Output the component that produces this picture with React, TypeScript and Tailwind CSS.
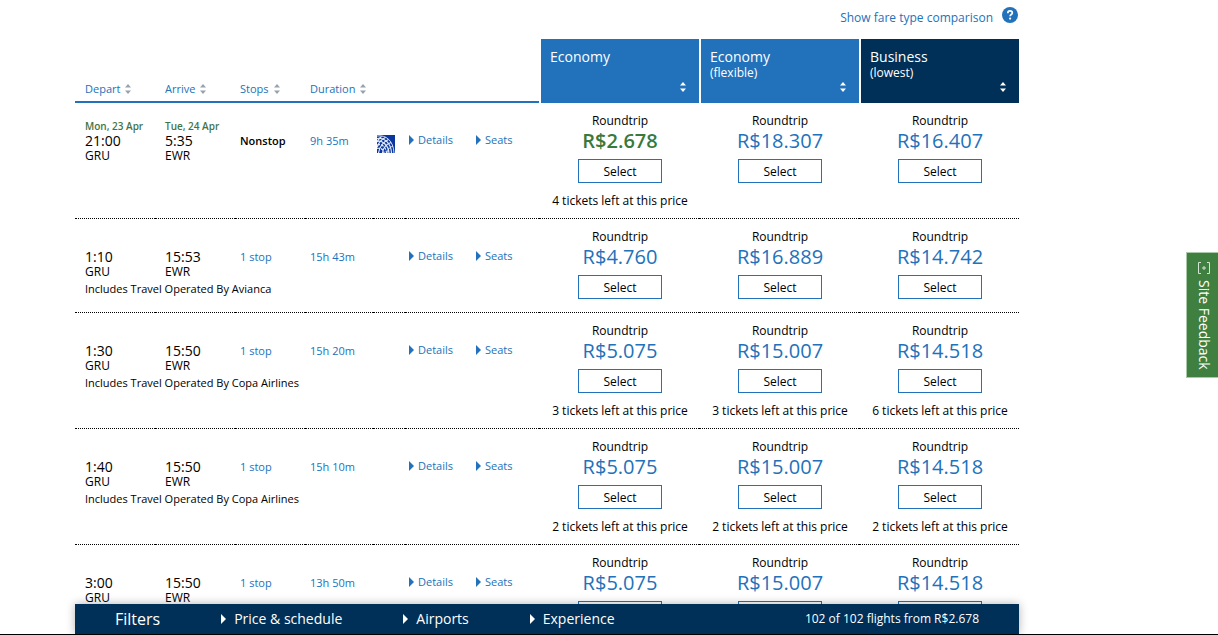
interface Fare {
  price: string;
  left?: number;
  best?: boolean;
}

interface Flight {
  id: number;
  depart: string;
  arrive: string;
  departDate?: string;
  arriveDate?: string;
  stops: string;
  duration: string;
  operatedBy?: string;
  united?: boolean;
  fares: Fare[];
}

const flights: Flight[] = [
  {
    id: 1,
    depart: "21:00",
    arrive: "5:35",
    departDate: "Mon, 23 Apr",
    arriveDate: "Tue, 24 Apr",
    stops: "Nonstop",
    duration: "9h 35m",
    united: true,
    fares: [
      { price: "R$2.678", left: 4, best: true },
      { price: "R$18.307" },
      { price: "R$16.407" },
    ],
  },
  {
    id: 2,
    depart: "1:10",
    arrive: "15:53",
    stops: "1 stop",
    duration: "15h 43m",
    operatedBy: "Avianca",
    fares: [{ price: "R$4.760" }, { price: "R$16.889" }, { price: "R$14.742" }],
  },
  {
    id: 3,
    depart: "1:30",
    arrive: "15:50",
    stops: "1 stop",
    duration: "15h 20m",
    operatedBy: "Copa Airlines",
    fares: [
      { price: "R$5.075", left: 3 },
      { price: "R$15.007", left: 3 },
      { price: "R$14.518", left: 6 },
    ],
  },
  {
    id: 4,
    depart: "1:40",
    arrive: "15:50",
    stops: "1 stop",
    duration: "15h 10m",
    operatedBy: "Copa Airlines",
    fares: [
      { price: "R$5.075", left: 2 },
      { price: "R$15.007", left: 2 },
      { price: "R$14.518", left: 2 },
    ],
  },
  {
    id: 5,
    depart: "3:00",
    arrive: "15:50",
    stops: "1 stop",
    duration: "13h 50m",
    fares: [{ price: "R$5.075" }, { price: "R$15.007" }, { price: "R$14.518" }],
  },
];

const columns = [
  { label: "Depart", pad: "pl-2.5" },
  { label: "Arrive", pad: "pl-2.5" },
  { label: "Stops", pad: "pl-[5px]" },
  { label: "Duration", pad: "pl-[5px]" },
];

const cabins = [
  { name: "Economy", note: "", bg: "bg-[#2272bb]" },
  { name: "Economy", note: "(flexible)", bg: "bg-[#2272bb]" },
  { name: "Business", note: "(lowest)", bg: "bg-[#002f57]" },
];

const filters = ["Price & schedule", "Airports", "Experience"];

function SortIcon() {
  return (
    <svg width="6" height="10" viewBox="0 0 6 10" fill="currentColor" aria-hidden="true">
      <path d="M0 3.5 3 0l3 3.5zM0 6.5 3 10l3-3.5z" />
    </svg>
  );
}

function Caret() {
  return (
    <svg width="5" height="10" viewBox="0 0 5 10" fill="currentColor" aria-hidden="true">
      <path d="M0 0 5 5 0 10z" />
    </svg>
  );
}

function HelpIcon() {
  return (
    <svg width="16" height="16" viewBox="0 0 16 16" fill="none" aria-hidden="true">
      <circle cx="8" cy="8" r="8" fill="#2272bb" />
      <path d="M5.8 6.2C5.8 4.6 6.8 3.9 8 3.9s2.3.8 2.3 2c0 1.6-2.2 1.600-2.200 3.300" stroke="#fff" strokeWidth="1.7" />
      <circle cx="8.1" cy="11.6" r="1.1" fill="#fff" />
    </svg>
  );
}

function UnitedLogo() {
  return (
    <svg width="18" height="18" viewBox="0 0 18 18" role="img" aria-label="United">
      <rect width="18" height="18" fill="#0a369d" />
      <g fill="none" stroke="#e6edf9" strokeWidth="1.2">
        <path d="M0 1C9-.5 16.500 6 17 18" strokeWidth=".9" />
        <path d="M0 3.500C7 2 14 8 14.500 18" />
        <path d="M0 6.500C5 5 11.500 10 12 18" />
        <path d="M0 10c5-1.500 9 2 9.500 8" strokeDasharray="3 1" />
        <path d="M0 13.500c4-1 6.500 1 7 4.500" strokeDasharray="3 1" />
        <path d="M0 7C1 4.500 2.500 3 4.500 1.500" />
        <path d="M0 12.500C1.500 8 4 4.500 8.500 2.500" />
        <path d="M1.500 18C2.500 12 6 7 11.500 4.500" />
        <path d="M5.500 18c.5-4.500 3-8.500 8.500-10.500" />
        <path d="M10 18c.5-3 2-5.500 6-7" strokeWidth=".9" />
      </g>
    </svg>
  );
}

function Endpoint({ time, airport, date }: { time: string; airport: string; date?: string }) {
  return (
    <>
      <div className="h-3.5 whitespace-nowrap text-[10px] font-semibold leading-3.5 text-[#447345]">
        {date}
      </div>
      <div className="text-sm leading-4">{time}</div>
      <div className="text-xs leading-3.5">{airport}</div>
    </>
  );
}

function FareCell({ fare }: { fare: Fare }) {
  return (
    <td className="pb-[9px] pl-0.5 pt-[9px] text-center">
      <div className="text-xs leading-[18px]">Roundtrip</div>
      <div
        className={
          fare.best
            ? "text-xl font-semibold leading-[22px] text-[#397a3a]"
            : "text-xl leading-[22px] text-[#2272bb]"
        }
      >
        {fare.price}
      </div>
      <button
        type="button"
        className="mx-auto mt-[7px] block h-6 w-21 border border-[#2272bb] bg-white pt-0.5 text-xs hover:bg-blue-50"
      >
        Select
      </button>
      {fare.left && (
        <div className="mt-2.5 whitespace-nowrap text-xs leading-4">
          {fare.left} tickets left at this price
        </div>
      )}
    </td>
  );
}

function FlightRow({ flight }: { flight: Flight }) {
  return (
    <tr className="border-b border-dotted border-black align-top">
      <td className="pb-[13px] pl-2.5 pt-4">
        <Endpoint time={flight.depart} airport="GRU" date={flight.departDate} />
        {flight.operatedBy && (
          <div className="whitespace-nowrap text-[11px] leading-5">
            Includes Travel Operated By {flight.operatedBy}
          </div>
        )}
      </td>
      <td className="pl-2.5 pt-4">
        <Endpoint time={flight.arrive} airport="EWR" date={flight.arriveDate} />
      </td>
      <td className="pl-[5px] pt-[30px] text-[11px] font-semibold leading-4">
        {flight.stops === "Nonstop" ? (
          flight.stops
        ) : (
          <a href="#stops" className="font-medium text-[#2272bb]">
            {flight.stops}
          </a>
        )}
      </td>
      <td className="pl-[5px] pt-[30px] text-[11px] leading-4 text-[#2272bb]">
        <a href="#duration">{flight.duration}</a>
      </td>
      <td className="pl-1 pt-8">{flight.united && <UnitedLogo />}</td>
      <td className="pl-1 pt-[29px]">
        <div className="flex gap-[23px] text-[11px] leading-4 text-[#2272bb]">
          <a href="#details" className="flex items-center gap-1">
            <Caret />
            Details
          </a>
          <a href="#seats" className="flex items-center gap-1">
            <Caret />
            Seats
          </a>
        </div>
      </td>
      {flight.fares.map((fare, i) => (
        <FareCell key={i} fare={fare} />
      ))}
    </tr>
  );
}

export default function App() {
  return (
    <div className="flex h-screen flex-col overflow-hidden bg-white font-['Open_Sans',sans-serif] text-black">
      <main className="min-h-0 flex-1 overflow-hidden pl-[75px] pr-[199px]">
        <div className="flex h-[39px] items-start justify-end gap-[9px] pr-px pt-[7px] text-xs text-[#2272bb]">
          <a href="#fares" className="leading-[22px]">
            Show fare type comparison
          </a>
          <button type="button" aria-label="Help">
            <HelpIcon />
          </button>
        </div>

        <table className="w-full table-fixed border-collapse">
          <colgroup>
            <col className="w-20" />
            <col className="w-20" />
            <col className="w-[70px]" />
            <col className="w-[68px]" />
            <col className="w-8" />
            <col />
            <col className="w-40" />
            <col className="w-40" />
            <col className="w-40" />
          </colgroup>
          <thead>
            <tr className="h-16">
              {columns.map((col) => (
                <th
                  key={col.label}
                  className={`${col.pad} pb-1.5 text-left align-bottom font-normal shadow-[inset_0_-2px_#2272bb]`}
                >
                  <button
                    type="button"
                    className="flex items-center gap-[5px] text-[11px] leading-4 text-[#2272bb]"
                  >
                    {col.label}
                    <span className="text-gray-400">
                      <SortIcon />
                    </span>
                  </button>
                </th>
              ))}
              <th className="shadow-[inset_0_-2px_#2272bb]" />
              <th className="shadow-[inset_0_-2px_#2272bb]" />
              {cabins.map((cabin, i) => (
                <th key={i} className="pl-0.5 text-left align-top font-normal text-white">
                  <div
                    className={`${cabin.bg} flex h-16 flex-col justify-between pb-[11px] pl-[9px] pr-2.5 pt-2`}
                  >
                    <div>
                      <div className="text-sm leading-5">{cabin.name}</div>
                      <div className="text-xs leading-3">{cabin.note}</div>
                    </div>
                    <button
                      type="button"
                      aria-label={`Sort by ${cabin.name} ${cabin.note}`}
                      className="mr-[3px] self-end"
                    >
                      <SortIcon />
                    </button>
                  </div>
                </th>
              ))}
            </tr>
          </thead>
          <tbody>
            {flights.map((flight) => (
              <FlightRow key={flight.id} flight={flight} />
            ))}
          </tbody>
        </table>
      </main>

      {/* Filter bar */}
      <footer className="z-10 border-b border-black pl-[75px] pr-[199px]">
        <div className="flex h-[30px] items-center bg-[#002f57] px-10 text-white shadow-[0_0_10px_rgba(0,0,0,0.3)]">
          <nav className="flex items-center gap-[61px] text-sm">
            <span className="text-base">Filters</span>
            {filters.map((label) => (
              <button key={label} type="button" className="flex items-center gap-2">
                <Caret />
                {label}
              </button>
            ))}
          </nav>
          <span className="ml-auto text-xs">102 of 102 flights from R$2.678</span>
        </div>
      </footer>

      {/* Feedback tab */}
      <button
        type="button"
        className="fixed right-0 top-[252px] z-20 flex h-[126px] w-8 flex-col items-center gap-1.5 border border-r-0 border-[#a9c9a9] bg-[#3f7f3f] pl-0.5 pt-[9px] text-sm font-medium leading-5 text-white"
      >
        <svg width="14" height="12" viewBox="0 0 14 12" fill="none" stroke="#d5e5d5" aria-hidden="true">
          <path d="M4 .5H1.500v11H4M10 .5h2.500v11H10M7 4v4M5 6h4" />
        </svg>
        <span className="[writing-mode:vertical-rl]">Site Feedback</span>
      </button>
    </div>
  );
}
